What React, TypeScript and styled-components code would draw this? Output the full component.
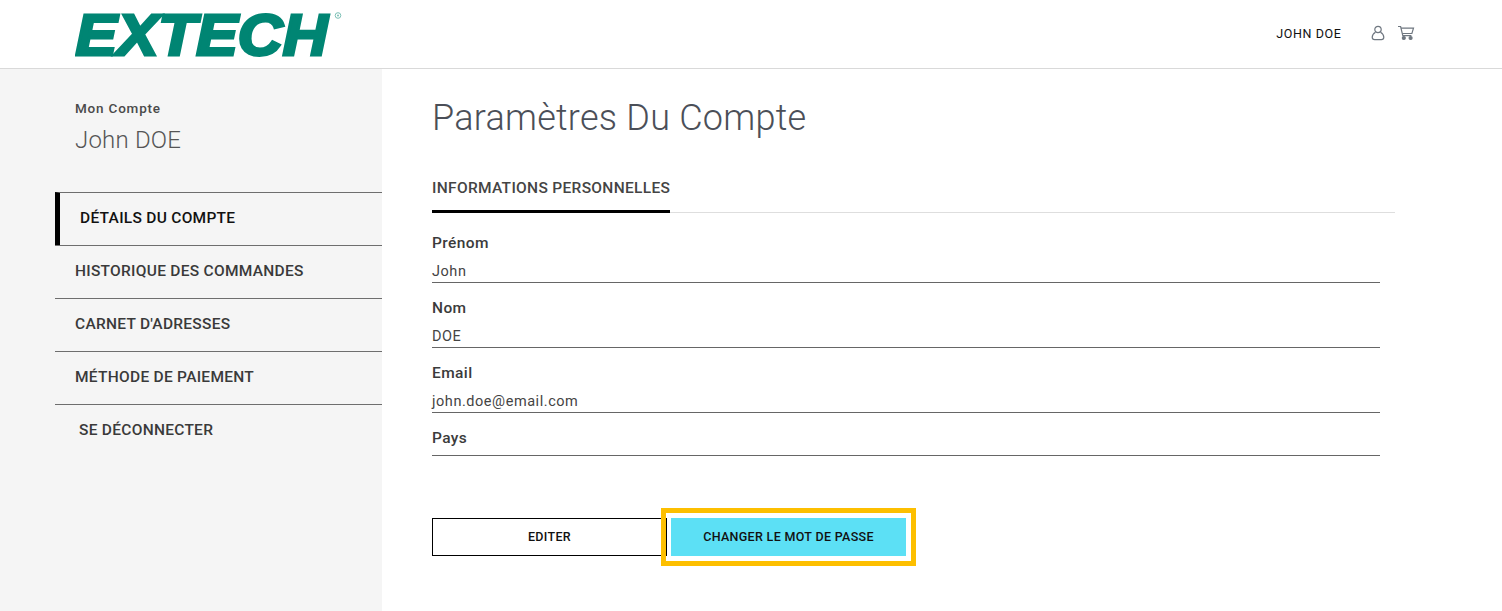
import React, { FC } from 'react'
import styled, { createGlobalStyle } from 'styled-components'

const GlobalStyle = createGlobalStyle`
  html, body {
    margin: 0;
    padding: 0;
    background: #fff;
    font-family: Roboto, 'Liberation Sans', sans-serif;
    color: #333;
  }
  * { box-sizing: border-box; }
`

const Page = styled.div`
  min-height: 100vh;
  display: flex;
  flex-direction: column;
  overflow: hidden;
`

const Header = styled.header`
  height: 69px;
  flex: none;
  display: flex;
  justify-content: space-between;
  align-items: flex-start;
  padding: 0 87px 0 75px;
  border-bottom: 1px solid #d9d9d9;
`

const LogoMark = styled.svg`
  display: block;
  width: 270px;
  height: 68px;
`

const UserArea = styled.div`
  display: flex;
  align-items: center;
  height: 66px;
`

const UserName = styled.span`
  font-size: 12.5px;
  letter-spacing: 0.6px;
  color: #111;
  margin-right: 28.5px;
`

const IconGlyph = styled.svg<{ $gap?: number }>`
  display: block;
  fill: none;
  stroke: #6f7780;
  stroke-width: 1.2;
  margin-right: ${({ $gap }) => $gap ?? 0}px;
`

const Body = styled.div`
  flex: 1;
  display: grid;
  grid-template-columns: 382px 1fr;
`

const Sidebar = styled.aside`
  background: #f5f5f5;
  padding: 31px 0 0 55px;
`

const Account = styled.div`
  padding-left: 20px;
  margin-bottom: 36px;
`

const AccountLabel = styled.div`
  font-size: 13.5px;
  line-height: 16px;
  font-weight: 500;
  letter-spacing: 0.8px;
  color: #4a4a4a;
`

const AccountName = styled.div`
  margin-top: 8px;
  font-size: 24px;
  line-height: 32px;
  font-weight: 300;
  letter-spacing: 0.2px;
  color: #555;
`

const Nav = styled.nav`
  display: flex;
  flex-direction: column;
`

const NavItem = styled.a<{ $active?: boolean; $plain?: boolean }>`
  height: 53px;
  display: flex;
  align-items: center;
  padding-bottom: 3px;
  font-size: 15.5px;
  font-weight: 500;
  letter-spacing: 0.28px;
  color: ${({ $active }) => ($active ? '#111' : '#3a3a3a')};
  border-top: 1px solid #6e6e6e;
  padding-left: ${({ $plain }) => ($plain ? '24px' : '20px')};
  ${({ $active }) =>
    $active &&
    `
    border-left: 5px solid #000;
    border-bottom: 1px solid #6e6e6e;
    height: 54px;
    margin-bottom: -1px;
  `}
`

const Main = styled.main`
  padding: 27px 107px 0 50px;
`

const Title = styled.h1`
  margin: 0;
  font-size: 36px;
  line-height: 44px;
  font-weight: 300;
  letter-spacing: 0.25px;
  color: #4b4f58;
`

const Tabs = styled.div`
  margin-top: 26px;
  height: 47px;
  border-bottom: 1px solid #dedede;
`

const Tab = styled.div`
  display: inline-flex;
  align-items: center;
  height: 47px;
  border-bottom: 3px solid #000;
  padding-bottom: 1px;
  font-size: 15.5px;
  font-weight: 500;
  letter-spacing: 0.32px;
  color: #444;
`

const Form = styled.div`
  margin-top: 17px;
  padding-right: 15px;
  display: flex;
  flex-direction: column;
  gap: 12px;
`

const Field = styled.div<{ $empty?: boolean }>`
  height: ${({ $empty }) => ($empty ? '31px' : '53px')};
  display: flex;
  flex-direction: column;
  justify-content: space-between;
  ${({ $empty }) => $empty && 'border-bottom: 1px solid #666;'}
`

const FieldLabel = styled.label`
  padding-top: 1px;
  font-size: 15.5px;
  line-height: 24px;
  font-weight: 500;
  letter-spacing: 0.4px;
  color: #3b3b3b;
`

const FieldValue = styled.div`
  height: 25px;
  padding-top: 2px;
  line-height: 23px;
  font-size: 14.5px;
  letter-spacing: 0.55px;
  color: #444;
  border-bottom: 1px solid #666;
`

const Actions = styled.div`
  margin-top: 62px;
  display: flex;
  gap: 4px;
`

const ActionButton = styled.button<{ $primary?: boolean }>`
  width: 235px;
  height: 38px;
  padding: 0 0 2px;
  border: ${({ $primary }) => ($primary ? '0' : '1px solid #000')};
  border-radius: 0;
  background: ${({ $primary }) => ($primary ? '#5ce0f5' : '#fff')};
  font-family: inherit;
  font-size: 12.5px;
  font-weight: 500;
  letter-spacing: 0.32px;
  color: #111;
  ${({ $primary }) => $primary && 'outline: 5px solid #fdbf00; outline-offset: 5px;'}
`

const ExtechLogo: FC = () => (
  <LogoMark viewBox='0 0 270 68'>
    <text
      x='0.5'
      y='54.5'
      textLength='252'
      lengthAdjust='spacingAndGlyphs'
      fontFamily='Liberation Sans'
      fontWeight='700'
      fontStyle='italic'
      fontSize='58'
      fill='#008573'
      stroke='#008573'
      strokeWidth='3'
    >
      EXTECH
    </text>
    <circle cx='263' cy='15.5' r='2.8' fill='none' stroke='#7cc0b5' strokeWidth='1' />
    <circle cx='263' cy='15.5' r='1' fill='#7cc0b5' />
  </LogoMark>
)

const App: FC = () => (
  <Page>
    <GlobalStyle />
    <Header>
      <ExtechLogo />
      <UserArea>
        <UserName>JOHN DOE</UserName>
        <IconGlyph $gap={11} width='16' height='16' viewBox='0 0 16 16'>
          <circle cx='8' cy='4.5' r='3.2' />
          <path d='M5.5 7.2C3.4 8.4 2.2 10 2.2 12.2c0 1.6 1 2.4 2.4 2.4h6.8c1.4 0 2.4-.8 2.4-2.4 0-2.2-1.2-3.8-3.3-5' />
        </IconGlyph>
        <IconGlyph width='18' height='16' viewBox='0 0 18 16'>
          <path d='M1 1.5h2.6l2.2 9.2h8.6' />
          <path d='M4 3.2h12.5l-1.6 5.3H5.3' />
          <circle cx='6.8' cy='13' r='1.5' fill='#6f7780' />
          <circle cx='13.6' cy='13' r='1.5' fill='#6f7780' />
        </IconGlyph>
      </UserArea>
    </Header>
    <Body>
      <Sidebar>
        <Account>
          <AccountLabel>Mon Compte</AccountLabel>
          <AccountName>John DOE</AccountName>
        </Account>
        <Nav>
          <NavItem $active>DÉTAILS DU COMPTE</NavItem>
          <NavItem>HISTORIQUE DES COMMANDES</NavItem>
          <NavItem>CARNET D'ADRESSES</NavItem>
          <NavItem>MÉTHODE DE PAIEMENT</NavItem>
          <NavItem $plain>SE DÉCONNECTER</NavItem>
        </Nav>
      </Sidebar>
      <Main>
        <Title>Paramètres Du Compte</Title>
        <Tabs>
          <Tab>INFORMATIONS PERSONNELLES</Tab>
        </Tabs>
        <Form>
          <Field>
            <FieldLabel>Prénom</FieldLabel>
            <FieldValue>John</FieldValue>
          </Field>
          <Field>
            <FieldLabel>Nom</FieldLabel>
            <FieldValue>DOE</FieldValue>
          </Field>
          <Field>
            <FieldLabel>Email</FieldLabel>
            <FieldValue>john.doe@email.com</FieldValue>
          </Field>
          <Field $empty>
            <FieldLabel>Pays</FieldLabel>
          </Field>
        </Form>
        <Actions>
          <ActionButton>EDITER</ActionButton>
          <ActionButton $primary>CHANGER LE MOT DE PASSE</ActionButton>
        </Actions>
      </Main>
    </Body>
  </Page>
)

export default App
